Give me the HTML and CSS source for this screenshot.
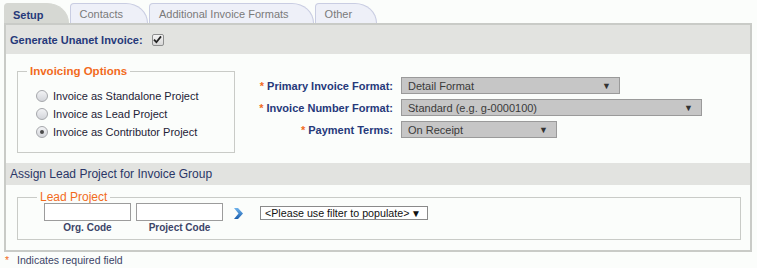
FILE: index.html
```html
<!DOCTYPE html>
<html lang="en">
<head>
    <meta charset="UTF-8">
    <title>Invoice Setup</title>
    <link rel="stylesheet" href="styles.css">
</head>
<body>
    <div class="tabs">
        <div class="tab active">Setup</div>
        <div class="tab">Contacts</div>
        <div class="tab">Additional Invoice Formats</div>
        <div class="tab">Other</div>
    </div>

    <div class="panel">
        <div class="section-head">
            Generate Unanet Invoice:
            <span class="checkbox">
                <svg width="9" height="9" viewBox="0 0 9 9"><path d="M1 4.6 L3.4 7.2 L8 1.4" fill="none" stroke="#222" stroke-width="1.8"/></svg>
            </span>
        </div>

        <div class="section-body setup-body">
            <fieldset class="group options">
                <legend class="bold">Invoicing Options</legend>
                <label class="radio-row"><span class="radio"></span>Invoice as Standalone Project</label>
                <label class="radio-row"><span class="radio"></span>Invoice as Lead Project</label>
                <label class="radio-row"><span class="radio checked"></span>Invoice as Contributor Project</label>
            </fieldset>

            <div class="formats">
                <div class="field-label"><span class="req">*</span> Primary Invoice Format:</div>
                <div class="select w-primary"><span>Detail Format</span><span class="caret">▼</span></div>

                <div class="field-label"><span class="req">*</span> Invoice Number Format:</div>
                <div class="select w-number"><span>Standard (e.g. g-0000100)</span><span class="caret">▼</span></div>

                <div class="field-label"><span class="req">*</span> Payment Terms:</div>
                <div class="select w-terms"><span>On Receipt</span><span class="caret">▼</span></div>
            </div>
        </div>

        <div class="section-head small">Assign Lead Project for Invoice Group</div>

        <div class="section-body lead-body">
            <fieldset class="group lead">
                <legend>Lead Project</legend>
                <div class="lead-row">
                    <div class="code-field">
                        <input type="text">
                        <span>Org. Code</span>
                    </div>
                    <div class="code-field">
                        <input type="text">
                        <span>Project Code</span>
                    </div>
                    <svg class="go" width="11" height="11" viewBox="0 0 11 11">
                        <defs>
                            <linearGradient id="chev" x1="0" y1="0" x2="0" y2="1">
                                <stop offset="0" stop-color="#6fb3ec"/>
                                <stop offset="1" stop-color="#1b5fae"/>
                            </linearGradient>
                        </defs>
                        <path d="M1 0 L5 0 L10 5.5 L5 11 L1 11 L5.5 5.5 Z" fill="url(#chev)"/>
                    </svg>
                    <div class="select plain"><span>&lt;Please use filter to populate&gt;</span><span class="caret">▼</span></div>
                </div>
            </fieldset>
        </div>
    </div>

    <div class="footnote"><span class="req">*</span> Indicates required field</div>
</body>
</html>
```

FILE: styles.css
```css
body {
    font-family: "Liberation Sans", Arial, sans-serif;
    font-size: 11px;
    background-color: #fbfdfb;
    color: #1f2540;
    margin: 0;
    padding: 3px 0 0 4px;
}

.tabs {
    display: flex;
    gap: 1px;
    height: 20px;
}

.tab {
    box-sizing: border-box;
    height: 20px;
    padding: 4px 24px 0 9px;
    background: #eef0f8;
    border: 1px solid #c9cde2;
    border-bottom: none;
    border-radius: 4px 22px 0 0 / 4px 20px 0 0;
    color: #7a7a7a;
    font-size: 11px;
}

.tab.active {
    background: #d6d8d3;
    border-color: #d6d8d3;
    color: #26397a;
    font-weight: bold;
    padding: 5px 24px 0 8px;
}

.panel {
    width: 744px;
    border: 2px solid #c9cbc7;
}

.section-head {
    background: #e2e3e0;
    height: 29px;
    display: flex;
    align-items: center;
    padding-left: 4px;
    color: #26397a;
    font-weight: bold;
    font-size: 11px;
}

.section-head.small {
    height: 22px;
    font-weight: normal;
    font-size: 12px;
    color: #2a3666;
}

.checkbox {
    box-sizing: border-box;
    width: 12px;
    height: 12px;
    margin-left: 9px;
    border: 1px solid #8e8f8f;
    border-radius: 2px;
    background: linear-gradient(#f4f4f4, #d7d7d7);
    display: flex;
    align-items: center;
    justify-content: center;
}

.section-body {
    padding: 11px 11px 10px 11px;
}

.setup-body {
    display: flex;
    align-items: flex-start;
}

.lead-body {
    padding-top: 5px;
}

.group {
    border: 1px solid #c9cbc7;
    margin: 0;
    padding: 0;
}

.group legend {
    color: #f26b1d;
    font-size: 12px;
    padding: 0 3px;
}

.group legend.bold {
    font-weight: bold;
    font-size: 11.5px;
}

.options {
    width: 218px;
    box-sizing: border-box;
    height: 88px;
    padding: 10px 0 0 18px;
}

.options legend {
    margin-left: -9px;
}

.radio-row {
    display: flex;
    align-items: center;
    height: 18px;
    font-size: 11px;
    color: #1d2236;
}

.radio {
    box-sizing: border-box;
    width: 12px;
    height: 12px;
    border-radius: 50%;
    border: 1px solid #a5a7ab;
    background: linear-gradient(#f2f3f5, #d3d5da);
    margin-right: 5px;
    display: flex;
    align-items: center;
    justify-content: center;
}

.radio.checked::after {
    content: "";
    width: 4px;
    height: 4px;
    border-radius: 50%;
    background: #4a4a4a;
}

.formats {
    display: grid;
    grid-template-columns: 148px auto;
    column-gap: 8px;
    row-gap: 5px;
    margin: 12px 0 0 10px;
    align-items: center;
}

.field-label {
    text-align: right;
    color: #26397a;
    font-weight: bold;
    font-size: 11px;
}

.req {
    color: #f26b1d;
}

.select {
    box-sizing: border-box;
    height: 17px;
    display: flex;
    align-items: center;
    justify-content: space-between;
    padding: 0 8px 0 6px;
    background: #c6c6c6;
    border: 1px solid #9a9a9a;
    color: #3a3a3a;
    font-size: 11px;
    white-space: nowrap;
}

.select .caret {
    font-size: 9px;
    color: #333;
}

.w-primary { width: 219px; }
.w-number { width: 301px; }
.w-terms { width: 156px; }

.select.plain {
    background: #fff;
    border-color: #8a8a8a;
    color: #111;
    height: 14px;
    width: 168px;
    padding: 0 6px 0 4px;
    margin: 3px 0 0 16px;
    font-size: 10.7px;
}

.select.plain .caret {
    color: #111;
    font-size: 10px;
}

.lead {
    width: 724px;
    box-sizing: border-box;
    height: 50px;
    padding: 0 0 0 26px;
}

.lead legend {
    margin-left: -7px;
}

.lead-row {
    display: flex;
    align-items: flex-start;
    margin-top: -1px;
}

.code-field {
    display: flex;
    flex-direction: column;
    align-items: center;
    margin-right: 5px;
}

.code-field input {
    box-sizing: border-box;
    width: 87px;
    height: 18px;
    border: 1px solid #9c9c9c;
    background: #fff;
    margin: 0;
}

.code-field span {
    font-size: 10px;
    font-weight: bold;
    color: #3b4467;
    margin-top: 1px;
}

.go {
    margin: 5px 0 0 5px;
}

.footnote {
    font-size: 10.5px;
    color: #3b4467;
    margin-top: 2px;
    padding-left: 1px;
}

.footnote .req {
    margin-right: 5px;
}
```
